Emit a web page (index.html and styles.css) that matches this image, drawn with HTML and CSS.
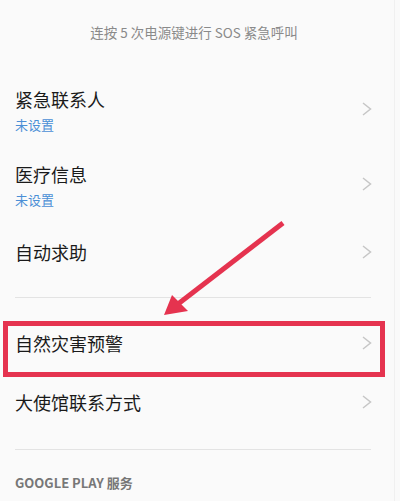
FILE: index.html
```html
<!DOCTYPE html>
<html lang="zh-CN">
<head>
    <meta charset="UTF-8">
    <title>紧急 SOS</title>
    <link rel="stylesheet" href="styles.css">
</head>
<body>
    <div class="screen">
        <div class="hint">连按 5 次电源键进行 SOS 紧急呼叫</div>

        <div class="item two-line">
            <div class="text">
                <div class="title">紧急联系人</div>
                <div class="sub">未设置</div>
            </div>
            <svg class="chevron" width="10" height="14" viewBox="0 0 10 14"><polyline points="1,1 8.5,7 1,13" fill="none" stroke="#c6c6c6" stroke-width="1.5"/></svg>
        </div>
        <div class="item two-line">
            <div class="text">
                <div class="title">医疗信息</div>
                <div class="sub">未设置</div>
            </div>
            <svg class="chevron" width="10" height="14" viewBox="0 0 10 14"><polyline points="1,1 8.5,7 1,13" fill="none" stroke="#c6c6c6" stroke-width="1.5"/></svg>
        </div>
        <div class="item last">
            <div class="text">
                <div class="title">自动求助</div>
            </div>
            <svg class="chevron" width="10" height="14" viewBox="0 0 10 14"><polyline points="1,1 8.5,7 1,13" fill="none" stroke="#c6c6c6" stroke-width="1.5"/></svg>
        </div>

        <div class="divider"></div>

        <div class="item single first">
            <div class="text">
                <div class="title">自然灾害预警</div>
            </div>
            <svg class="chevron" width="10" height="14" viewBox="0 0 10 14"><polyline points="1,1 8.5,7 1,13" fill="none" stroke="#c6c6c6" stroke-width="1.5"/></svg>
        </div>
        <div class="item single">
            <div class="text">
                <div class="title">大使馆联系方式</div>
            </div>
            <svg class="chevron" width="10" height="14" viewBox="0 0 10 14"><polyline points="1,1 8.5,7 1,13" fill="none" stroke="#c6c6c6" stroke-width="1.5"/></svg>
        </div>

        <div class="divider bottom"></div>

        <div class="section">GOOGLE PLAY 服务</div>
    </div>

    <!-- annotation drawn over the screenshot -->
    <svg class="marks" width="400" height="501" viewBox="0 0 400 501">
        <rect x="5.5" y="323.5" width="377" height="51" fill="none" stroke="#e5334f" stroke-width="5"/>
        <line x1="283" y1="223" x2="178" y2="304" stroke="#e5334f" stroke-width="5"/>
        <polygon points="164,315 172,295 188,311" fill="#e5334f"/>
    </svg>
</body>
</html>
```

FILE: styles.css
```css
body {
    margin: 0;
    background-color: #fafafa;
    font-family: "Noto Sans CJK SC", "Noto Sans", sans-serif;
    position: relative;
    width: 400px;
    height: 501px;
    overflow: hidden;
}

.screen {
    width: 395px;
    height: 501px;
    border-right: 1px solid #f0f0f0;
    box-sizing: border-box;
}

.hint {
    height: 64px;
    line-height: 64px;
    text-align: center;
    padding-right: 6px;
    font-size: 13.5px;
    color: #8a8a8a;
}

.item {
    display: flex;
    align-items: center;
    padding: 0 22px 0 15px;
}

.item.two-line {
    height: 75px;
    align-items: flex-start;
    padding-top: 22px;
    box-sizing: border-box;
}

.item.two-line .chevron {
    margin-top: 16px;
}

.item.last {
    height: 83px;
    padding-top: 25px;
    padding-bottom: 32px;
    box-sizing: border-box;
}

.item.single {
    height: 59px;
}

.item.single.first {
    margin-top: 15px;
}

.text {
    flex: 1;
}

.title {
    font-size: 18px;
    line-height: 26px;
    color: #1a1a1a;
}

.sub {
    font-size: 13px;
    line-height: 26px;
    color: #4a8fd6;
}

.chevron {
    display: block;
}

.divider {
    height: 1px;
    background-color: #e3e3e3;
    margin: 0 23px 0 15px;
}

.divider.bottom {
    margin-top: 18px;
}

.section {
    margin-top: 20px;
    padding-left: 15px;
    font-size: 13px;
    line-height: 26px;
    font-weight: bold;
    color: #777;
}

.marks {
    position: absolute;
    top: 0;
    left: 0;
    pointer-events: none;
}
```
